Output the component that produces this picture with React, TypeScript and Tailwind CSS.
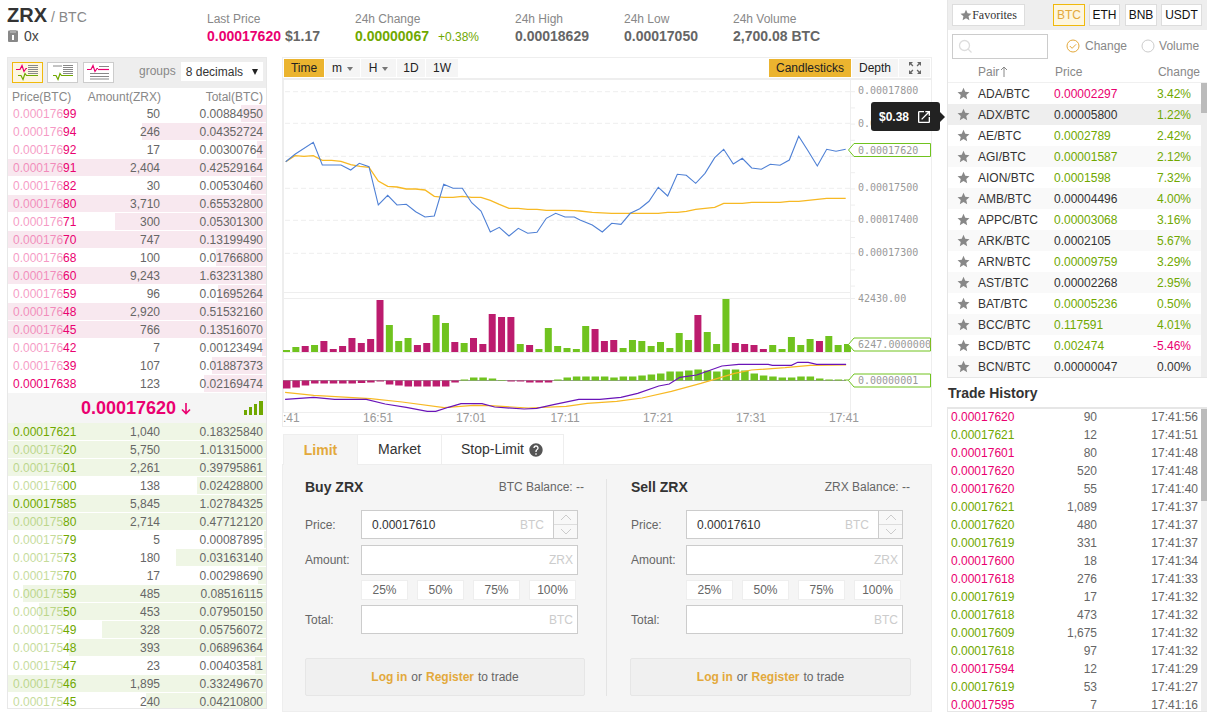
import React from "react";

const RED = "text-[#ea0070]";
const GREEN = "text-[#70a800]";

const asks: [string, string, string][] = [
  ["0.00017699", "50", "0.00884950"], ["0.00017694", "246", "0.04352724"], ["0.00017692", "17", "0.00300764"],
  ["0.00017691", "2,404", "0.42529164"], ["0.00017682", "30", "0.00530460"], ["0.00017680", "3,710", "0.65532800"],
  ["0.00017671", "300", "0.05301300"], ["0.00017670", "747", "0.13199490"], ["0.00017668", "100", "0.01766800"],
  ["0.00017660", "9,243", "1.63231380"], ["0.00017659", "96", "0.01695264"], ["0.00017648", "2,920", "0.51532160"],
  ["0.00017645", "766", "0.13516070"], ["0.00017642", "7", "0.00123494"], ["0.00017639", "107", "0.01887373"],
  ["0.00017638", "123", "0.02169474"],
];
const bids: [string, string, string][] = [
  ["0.00017621", "1,040", "0.18325840"], ["0.00017620", "5,750", "1.01315000"], ["0.00017601", "2,261", "0.39795861"],
  ["0.00017600", "138", "0.02428800"], ["0.00017585", "5,845", "1.02784325"], ["0.00017580", "2,714", "0.47712120"],
  ["0.00017579", "5", "0.00087895"], ["0.00017573", "180", "0.03163140"], ["0.00017570", "17", "0.00298690"],
  ["0.00017559", "485", "0.08516115"], ["0.00017550", "453", "0.07950150"], ["0.00017549", "328", "0.05756072"],
  ["0.00017548", "393", "0.06896364"], ["0.00017547", "23", "0.00403581"], ["0.00017546", "1,895", "0.33249670"],
  ["0.00017545", "240", "0.04210800"],
];
const pairs: [string, string, "r" | "g" | "d", string, "r" | "g" | "d"][] = [
  ["ADA/BTC", "0.00002297", "r", "3.42%", "g"], ["ADX/BTC", "0.00005800", "d", "1.22%", "g"],
  ["AE/BTC", "0.0002789", "g", "2.42%", "g"], ["AGI/BTC", "0.00001587", "g", "2.12%", "g"],
  ["AION/BTC", "0.0001598", "g", "7.32%", "g"], ["AMB/BTC", "0.00004496", "d", "4.00%", "g"],
  ["APPC/BTC", "0.00003068", "g", "3.16%", "g"], ["ARK/BTC", "0.0002105", "d", "5.67%", "g"],
  ["ARN/BTC", "0.00009759", "g", "3.29%", "g"], ["AST/BTC", "0.00002268", "d", "2.95%", "g"],
  ["BAT/BTC", "0.00005236", "g", "0.50%", "g"], ["BCC/BTC", "0.117591", "g", "4.01%", "g"],
  ["BCD/BTC", "0.002474", "g", "-5.46%", "r"], ["BCN/BTC", "0.00000047", "d", "0.00%", "d"],
];
const trades: [string, string, string, "r" | "g"][] = [
  ["0.00017620", "90", "17:41:56", "r"], ["0.00017621", "12", "17:41:51", "g"], ["0.00017601", "80", "17:41:48", "r"],
  ["0.00017620", "520", "17:41:48", "r"], ["0.00017620", "55", "17:41:40", "r"], ["0.00017621", "1,089", "17:41:37", "g"],
  ["0.00017620", "480", "17:41:37", "g"], ["0.00017619", "331", "17:41:37", "g"], ["0.00017600", "18", "17:41:34", "r"],
  ["0.00017618", "276", "17:41:33", "r"], ["0.00017619", "17", "17:41:32", "g"], ["0.00017618", "473", "17:41:32", "g"],
  ["0.00017609", "1,675", "17:41:32", "g"], ["0.00017618", "97", "17:41:32", "g"], ["0.00017594", "12", "17:41:29", "r"],
  ["0.00017619", "53", "17:41:27", "g"], ["0.00017595", "7", "17:41:16", "r"],
];

const tone = (t: "r" | "g" | "d") => (t === "r" ? RED : t === "g" ? GREEN : "text-[#333]");

function BookRow({ row, side, solid }: { row: [string, string, string]; side: "a" | "b"; solid: boolean }) {
  const w = Math.min(258, parseFloat(row[2]) * 2850);
  const c = side === "a" ? RED : GREEN;
  const cut = row[0].length - 2;
  return (
    <div className="relative h-[18px] flex text-[12px] leading-[18px] text-[#666]">
      <div
        className={`absolute right-0 top-0 h-[17px] ${side === "a" ? "bg-[#f8e8ef]" : "bg-[#eff6e5]"}`}
        style={{ width: w }}
      />
      <div className={`relative w-[80px] pl-[5px] ${c}`}>
        {solid ? (
          row[0]
        ) : (
          <>
            <span className="opacity-40">{row[0].slice(0, cut)}</span>
            {row[0].slice(cut)}
          </>
        )}
      </div>
      <div className="relative w-[72px] text-right">{row[1]}</div>
      <div className="relative flex-1 text-right pr-[3px]">{row[2]}</div>
    </div>
  );
}

function BookIcon({ mode }: { mode: 0 | 1 | 2 }) {
  return (
    <svg width="24" height="17" viewBox="0 0 24 17">
      {mode !== 1 && (
        <path d="M0 5.5h4l2-4 2 6 2-3h1" fill="none" stroke="#ea0070" strokeWidth="1.2" />
      )}
      {mode !== 2 && (
        <path d="M2 11.5h3l2 4 2-6 1.5 2H22" fill="none" stroke="#70a800" strokeWidth="1.2" />
      )}
      {mode === 2 && <path d="M11 5.5h11" stroke="#ea0070" strokeWidth="1.2" />}
      {mode === 1 && <path d="M2 2h9" stroke="#888" strokeWidth="1" />}
      <path
        d={mode === 2 ? "M3 9.5h19M3 12.5h19M3 15h19M12 2.5h10" : "M12 1.5h10M12 3.5h10M12 5.5h10M12 7.5h10M12 9.5h10"}
        stroke="#888"
        strokeWidth="1"
      />
    </svg>
  );
}

const Star = ({ size = 13 }: { size?: number }) => (
  <svg width={size} height={size} viewBox="0 0 24 24" fill="#888">
    <path d="M12 1.5l3.2 7.2 7.8.8-5.9 5.2 1.7 7.8L12 18.4l-6.8 4.1 1.7-7.8L1 9.5l7.8-.8z" />
  </svg>
);

const blue: [number, number][] = [
  [285.7, 161.7], [295, 154.3], [313.3, 142.3], [322.3, 165], [341, 165], [350.7, 170], [359.3, 163.3], [369, 166.7],
  [378.3, 205], [387.7, 195.3], [397, 205], [406.3, 204.3], [415.7, 211.7], [425, 217], [434.3, 216], [443.7, 184.3],
  [453, 188.3], [462.3, 188.3], [471.7, 202.7], [481, 211], [490.3, 232], [499.3, 227.3], [509, 236], [518.3, 228.3],
  [527.7, 233.3], [537, 232.3], [546.3, 218.3], [555.7, 213.3], [565, 217], [574.3, 217], [580, 220], [592.3, 225],
  [602.3, 232], [611.7, 223.3], [621, 224.3], [630.3, 213.3], [639.7, 208.7], [649, 201.3], [658.3, 187.3], [667.7, 196],
  [677.3, 174.3], [686.3, 175.3], [695.7, 183.3], [705, 173.3], [714.7, 157.7], [723.7, 149.3], [733.3, 164], [742.3, 158.3],
  [751.7, 168], [761.3, 169.3], [770.3, 164.3], [780, 165.3], [789.3, 160], [798.7, 136.3], [808, 150.7], [817.3, 166],
  [826.7, 149.3], [836, 151.3], [845.7, 149.3],
];
const zoomA: [number, number][] = [
  [17, 305], [45, 287], [72, 289], [100, 287], [127, 301], [155, 301], [183, 304], [212, 314], [240, 319], [267, 322],
  [295, 363], [323, 379], [351, 381], [379, 387], [407, 387], [435, 390], [463, 409], [491, 412], [519, 412], [547, 409],
  [575, 412], [603, 412], [631, 421], [658, 433], [687, 445], [715, 445], [743, 448], [771, 448], [799, 451], [827, 451],
  [855, 451], [883, 452], [900, 453],
];
const zoomB: [number, number][] = [
  [37, 457], [95, 460], [235, 460], [263, 457], [292, 457], [319, 454], [347, 448], [375, 445], [404, 442], [431, 430],
  [487, 430], [515, 427], [600, 427], [628, 424], [656, 424], [684, 421], [740, 415], [797, 415],
];
const orange: [number, number][] = [
  ...zoomA.map(([x, y]): [number, number] => [x / 3 + 280, y / 3 + 60]),
  ...zoomB.map(([x, y]): [number, number] => [x / 3 + 580, y / 3 + 60]),
];
const purpleZ: [number, number][] = [
  [12, 328], [80, 322], [130, 328], [205, 328], [250, 342], [300, 352], [350, 364], [370, 364], [400, 352], [430, 341],
  [480, 341], [510, 351], [580, 357], [610, 355], [650, 344], [710, 328], [760, 328], [810, 322], [850, 310], [900, 288],
  [925, 282], [950, 262], [990, 255], [1050, 228], [1090, 223], [1160, 223], [1170, 226], [1215, 226], [1230, 217],
  [1255, 217], [1275, 223], [1345, 223],
];
const orange2Z: [number, number][] = [
  [12, 307], [80, 316], [215, 326], [290, 336], [390, 353], [460, 346], [500, 347], [590, 354], [680, 349], [730, 340],
  [800, 334], [860, 324], [930, 304], [1000, 280], [1080, 250], [1120, 240], [1200, 233], [1260, 226], [1345, 225],
];
const mapZ = (a: [number, number][]) => a.map(([x, y]) => `${(x / 2.376 + 280).toFixed(1)},${(y / 3 + 290).toFixed(1)}`).join(" ");
const pts = (a: [number, number][]) => a.map(([x, y]) => `${x.toFixed(1)},${y.toFixed(1)}`).join(" ");

const vols: [number, "g" | "m"][] = [
  [2, "g"], [5, "g"], [6, "m"], [7, "g"], [11, "m"], [3, "m"], [6, "m"], [14, "m"], [9, "m"], [13, "m"], [52, "m"], [27, "g"],
  [11, "g"], [14, "g"], [7, "m"], [9, "m"], [37, "g"], [29, "g"], [10, "m"], [9, "g"], [14, "m"], [8, "m"], [38, "m"], [35, "m"],
  [35, "m"], [8, "g"], [7, "m"], [3, "g"], [24, "g"], [6, "g"], [4, "g"], [3, "g"], [26, "g"], [23, "m"], [11, "m"], [12, "m"],
  [4, "g"], [12, "g"], [11, "g"], [6, "g"], [10, "g"], [4, "g"], [19, "g"], [12, "g"], [37, "m"], [20, "g"], [8, "g"], [53, "g"],
  [9, "m"], [8, "m"], [7, "m"], [3, "m"], [7, "g"], [3, "g"], [15, "g"], [7, "g"], [13, "g"], [11, "m"], [16, "g"], [7, "g"], [8, "g"],
];
const macd: number[] = [
  -8, -7, -5, -3, -3, -3, -3, -3, -2.5, -2, -1, -4, -5, -6, -6, -6, -6, -6, -2, 1, 3, 3, 2, 0.5, -1, -1, -2, -2, -2, 1, 3, 4, 4, 4, 4,
  3, 4, 4, 5, 6, 7, 9, 9, 10, 11, 10, 9, 11, 11, 10, 7, 5, 4, 3, 3, 4, 4, 2, 1, 1, 1,
];
const MAG = "#bc1c6e";
const GRN = "#70c31f";

function Chart() {
  const grid = [91.7, 123.3, 156.3, 188.3, 220.3, 253.3];
  const labels: [string, number][] = [
    ["0.00017800", 90.5], ["0.00017700", 123], ["0.00017500", 187.5], ["0.00017400", 219.5], ["0.00017300", 252.5],
  ];
  const ticks = Array.from({ length: 13 }, (_, i) => 91.7 + i * 16.2);
  const monoCls = "font-['DejaVu_Sans_Mono'] text-[10px] fill-[#999]";
  const times: [string, number][] = [["16:51", 378], ["17:01", 471], ["17:11", 565], ["17:21", 658], ["17:31", 751], ["17:41", 844]];
  return (
    <svg className="block" width="648" height="347" viewBox="283 80 648 347">
      <path d="M283.5 80V412M850.5 80V412M283 292.5H851M283 298.5H851M283 352.5H851M283 359.5H851M283 412.5H851" stroke="#eee" fill="none" />
      {grid.map((y) => (
        <path key={y} d={`M285 ${y}H850`} stroke="#eee" strokeWidth="1" strokeDasharray="5 3" />
      ))}
      {ticks.map((y) => (
        <path key={y} d={`M851 ${y}h4`} stroke="#eee" />
      ))}
      <path d="M851 298.5h4" stroke="#eee" />
      {labels.map(([t, y]) => (
        <text key={t} x="858" y={y + 3.5} className={monoCls}>{t}</text>
      ))}
      <text x="858" y="302" className={monoCls}>42430.00</text>
      <polyline points={pts(orange)} fill="none" stroke="#f7b924" strokeWidth="1.3" />
      <polyline points={pts(blue)} fill="none" stroke="#4f80d5" strokeWidth="1.1" />

      {vols.map(([h, c], i) => (
        <rect key={i} x={283 + i * 9.35} y={352 - h} width="7" height={h} fill={c === "g" ? GRN : MAG} />
      ))}
      <path d="M283 380.5H846" stroke="#555" strokeWidth="0.6" />
      {macd.map((h, i) => (
        <rect
          key={i}
          x={283 + i * 9.35}
          y={h < 0 ? 380.5 : 380.5 - h}
          width="7.5"
          height={Math.abs(h)}
          fill={h < 0 ? MAG : GRN}
        />
      ))}
      <polyline points={mapZ(orange2Z)} fill="none" stroke="#f7b924" strokeWidth="1.2" />
      <polyline points={mapZ(purpleZ)} fill="none" stroke="#6a14b8" strokeWidth="1.2" />

      {([[150, "0.00017620"], [344.5, "6247.0000000"], [380.5, "0.00000001"]] as [number, string][]).map(([y, t]) => (
        <g key={t}>
          <path d={`M930.5 ${y - 6.5}H854L848.5 ${y}L854 ${y + 6.5}H930.5Z`} fill="#fff" stroke={GRN} />
          <text x="858" y={y + 3.5} className={monoCls} textLength={t.length > 10 ? 73 : undefined}>{t}</text>
        </g>
      ))}

      <text x="283" y="422" className="text-[12px] fill-[#999]">:41</text>
      {times.map(([t, x]) => (
        <text key={t} x={x} y="422" textAnchor="middle" className="text-[12px] fill-[#999]">{t}</text>
      ))}
    </svg>
  );
}

const Caret = () => <span className="ml-[5px] inline-block border-x-[3.5px] border-t-[4px] border-x-transparent border-t-[#777] align-middle" />;

function Chev({ down }: { down?: boolean }) {
  return (
    <svg width="12" height="7" viewBox="0 0 12 7">
      <path d={down ? "M1 1l5 5 5-5" : "M1 6l5-5 5 5"} fill="none" stroke="#ccc" strokeWidth="1" />
    </svg>
  );
}

function Pct({ t }: { t: string }) {
  return <div className="w-[47px] h-[20px] bg-white border border-[#eee] text-center text-[12px] leading-[19px] text-[#666]">{t}</div>;
}

function Side({ title, balance, unit, sell }: { title: string; balance: string; unit: string; sell?: boolean }) {
  const label = `w-[56px] text-[12px] text-[#666] ${sell ? "pl-px" : ""}`;
  const box = "w-[217px] bg-white border border-[#ccc] text-[12px] flex items-center";
  const u = "ml-auto text-[#ccc]";
  return (
    <div className={`${sell ? "w-[281px]" : "w-[280px]"} flex flex-col`}>
      <div className={`h-[16px] flex items-center justify-between pr-px mb-[15px] ${sell ? "pl-px" : ""}`}>
        <span className="text-[14px] font-bold text-[#333]">{title}</span>
        <span className="text-[12px] text-[#666]">{balance}</span>
      </div>
      <div className="flex items-center h-[29px] mb-[6px]">
        <div className={label}>Price:</div>
        <div className={`${box} h-[29px]`}>
          <span className="pl-[10px] text-[#333]">0.00017610</span>
          <span className={`${u} pr-[9px]`}>{unit}</span>
          <div className="w-[24px] h-full border-l border-[#ccc] bg-[#f8f8f8] flex flex-col">
            <div className="h-[14px] flex items-center justify-center border-b border-[#ddd]"><Chev /></div>
            <div className="flex-1 flex items-center justify-center"><Chev down /></div>
          </div>
        </div>
      </div>
      <div className="flex items-center h-[30px] mb-[5px]">
        <div className={label}>Amount:</div>
        <div className={`${box} h-[30px]`}><span className={`${u} pr-[4px]`}>{title.split(" ")[1]}</span></div>
      </div>
      <div className="flex h-[20px] mb-[5px] pl-[56px] gap-[9px]">
        <Pct t="25%" /><Pct t="50%" /><Pct t="75%" /><Pct t="100%" />
      </div>
      <div className="flex items-center h-[29px] mb-[24px]">
        <div className={label}>Total:</div>
        <div className={`${box} h-[29px]`}><span className={`${u} pr-[4px]`}>{unit}</span></div>
      </div>
      <div className="h-[38px] rounded-[2px] border border-[#e6e6e6] bg-[#f0f0f0] flex items-center justify-center text-[12px] text-[#666]">
        <span className="font-bold text-[#e3a93c]">Log in</span>
        <span className="mx-[4px]">or</span>
        <span className="font-bold text-[#e3a93c]">Register</span>
        <span className="ml-[4px]">to trade</span>
      </div>
    </div>
  );
}

function Stat({ w, label, children }: { w: string; label: string; children: React.ReactNode }) {
  return (
    <div className={w}>
      <div className="h-[14px] leading-[14px] text-[12px] text-[#888]">{label}</div>
      <div className="mt-[2px] h-[16px] leading-[16px] text-[14px] font-bold text-[#666] whitespace-nowrap">{children}</div>
    </div>
  );
}

export default function App() {
  return (
    <div className="w-[1223px] h-[726px] overflow-hidden bg-white flex pl-[7px] font-['Liberation_Sans',Arial,sans-serif]">
      <div className="w-[925px] flex flex-col shrink-0">
        {/* Header */}
        <div className="h-[57px] flex">
          <div className="w-[200px] pt-[5px]">
            <div className="h-[20px] flex items-baseline leading-[20px]">
              <span className="text-[20px] font-bold text-[#333]">ZRX</span>
              <span className="ml-[4px] text-[14px] text-[#888]">/ BTC</span>
            </div>
            <div className="mt-[3px] h-[16px] flex items-center text-[14px] text-[#444]">
              <svg width="12" height="12" viewBox="0 0 12 12" className="mr-[5px]">
                <path d="M1 1.5Q1 .5 2 .5h8q1 0 1 1V11q0 1-1 1H2q-1 0-1-1Z" fill="#888" />
                <rect x="3" y="0" width="6" height="3" fill="#aaa" />
                <rect x="5" y="5" width="2" height="5" fill="#fff" />
              </svg>
              0x
            </div>
          </div>
          <div className="flex pt-[12px]">
            <Stat w="w-[148px]" label="Last Price">
              <span className={RED}>0.00017620</span>
              <span className="ml-[4px]">$1.17</span>
            </Stat>
            <Stat w="w-[160px]" label="24h Change">
              <span className={GREEN}>0.00000067</span>
              <span className={`ml-[9px] text-[12px] font-normal ${GREEN}`}>+0.38%</span>
            </Stat>
            <Stat w="w-[109px]" label="24h High">0.00018629</Stat>
            <Stat w="w-[109px]" label="24h Low">0.00017050</Stat>
            <Stat w="w-[130px]" label="24h Volume">2,700.08 BTC</Stat>
          </div>
        </div>

        <div className="flex gap-[15px]">
          {/* Order book */}
          <div className="w-[260px] h-[652px] border border-[#e8e8e8] shrink-0 overflow-hidden">
            <div className="h-[30px] bg-[#eee] flex items-start pt-[4px] pl-[4px]">
              <div className="w-[31px] h-[21px] border border-[#f0b90b] bg-[#fdf6e0] flex items-center justify-center"><BookIcon mode={0} /></div>
              <div className="ml-[4px] w-[31px] h-[21px] border border-[#ccc] bg-white flex items-center justify-center"><BookIcon mode={1} /></div>
              <div className="ml-[5px] w-[31px] h-[21px] border border-[#ccc] bg-white flex items-center justify-center"><BookIcon mode={2} /></div>
              <span className="ml-[25px] text-[12px] leading-[19px] text-[#888]">groups</span>
              <div className="ml-[5px] w-[82px] h-[19px] bg-white flex items-center pl-[5px] pr-[5px] text-[12px] text-[#333]">
                8 decimals
                <span className="ml-auto inline-block border-x-[3.5px] border-t-[6px] border-x-transparent border-t-[#222]" />
              </div>
            </div>
            <div className="h-[17px] flex text-[12px] leading-[18px] text-[#888]">
              <div className="w-[79px] pl-[4px]">Price(BTC)</div>
              <div className="w-[74px] text-right">Amount(ZRX)</div>
              <div className="flex-1 text-right pr-[3px]">Total(BTC)</div>
            </div>
            {asks.map((r, i) => <BookRow key={r[0]} row={r} side="a" solid={i === 15} />)}
            <div className="h-[30px] bg-[#f5f5f5] flex items-center">
              <span className={`ml-[73px] text-[18px] font-bold ${RED}`}>0.00017620</span>
              <svg width="10" height="13" viewBox="0 0 10 13" className="ml-[5px]">
                <path d="M5 1v10M1 7.5l4 4 4-4" fill="none" stroke="#ea0070" strokeWidth="1.6" />
              </svg>
              <svg width="20" height="14" viewBox="0 0 20 14" className="ml-[53px]">
                <path d="M0 9h3v5H0zM5 6h3v8H5zM10 3h3v11h-3zM15 0h4v14h-4z" fill="#70a800" />
              </svg>
            </div>
            {bids.map((r, i) => <BookRow key={r[0]} row={r} side="b" solid={i === 0 || i === 4} />)}
          </div>

          {/* Centre */}
          <div className="w-[650px] shrink-0 flex flex-col">
            <div className="relative h-[370px] border border-[#eee]">
              <div className="h-[22px] border-b-2 border-[#eee] flex items-start pt-px pl-px text-[12px] text-[#222]">
                <div className="w-[40px] h-[18px] leading-[18px] text-center bg-[#ebb42f]">Time</div>
                <div className="ml-px w-[35px] h-[18px] leading-[18px] text-center bg-[#f5f5f5]">m<Caret /></div>
                <div className="ml-px w-[35px] h-[18px] leading-[18px] text-center bg-[#f5f5f5]">H<Caret /></div>
                <div className="ml-px w-[28px] h-[18px] leading-[18px] text-center bg-[#f5f5f5]">1D</div>
                <div className="ml-px w-[32px] h-[18px] leading-[18px] text-center bg-[#f5f5f5]">1W</div>
                <div className="ml-auto w-[82px] h-[18px] leading-[18px] text-center bg-[#ebb42f]">Candlesticks</div>
                <div className="ml-px w-[46px] h-[18px] leading-[18px] text-center bg-[#f5f5f5]">Depth</div>
                <div className="ml-px mr-px w-[31px] h-[18px] flex items-center justify-center bg-[#f5f5f5]">
                  <svg width="16" height="16" viewBox="0 0 24 24" fill="#666">
                    <path d="M15 3l2.3 2.3-2.89 2.87 1.42 1.42L18.7 6.7 21 9V3zM3 9l2.3-2.3 2.87 2.89 1.42-1.42L6.7 5.3 9 3H3zm6 12l-2.3-2.3 2.89-2.87-1.42-1.42L5.3 17.3 3 15v6zm12-6l-2.3 2.3-2.87-2.89-1.42 1.42 2.89 2.87L15 21h6z" />
                  </svg>
                </div>
              </div>
              <Chart />
              <div className="absolute left-[588px] top-[44px] w-[69px] h-[29px] rounded-[3px] bg-[#222] flex items-center pl-[8px] text-[12px] font-bold text-white">
                $0.38
                <svg width="16" height="16" viewBox="0 0 24 24" fill="#fff" className="ml-[7px]">
                  <path d="M19 19H5V5h7V3H5c-1.11 0-2 .9-2 2v14c0 1.1.89 2 2 2h14c1.1 0 2-.9 2-2v-7h-2v7zM14 3v2h3.59l-9.83 9.83 1.41 1.41L19 6.41V10h2V3h-7z" />
                </svg>
                <span className="absolute left-[69px] top-[10px] border-y-[5px] border-l-[5px] border-y-transparent border-l-[#222]" />
              </div>
            </div>

            {/* Tabs */}
            <div className="mt-[7px] h-[30px] flex text-[14px] text-[#333] relative z-10">
              <div className="w-[74px] h-[31px] ml-px bg-[#f5f5f5] border-t border-l border-[#eee] flex items-center justify-center font-bold text-[#e3a93c]">Limit</div>
              <div className="w-[84px] h-[30px] border-t border-l border-[#eee] flex items-center justify-center">Market</div>
              <div className="w-[123px] h-[30px] border-t border-x border-[#eee] flex items-center justify-center">
                Stop-Limit
                <svg width="16" height="16" viewBox="0 0 24 24" fill="#555" className="ml-[4px]">
                  <path d="M12 2C6.48 2 2 6.48 2 12s4.48 10 10 10 10-4.48 10-10S17.52 2 12 2zm1 17h-2v-2h2v2zm2.07-7.75l-.9.92C13.45 12.9 13 13.5 13 15h-2v-.5c0-1.1.45-2.1 1.17-2.83l1.24-1.26c.37-.36.59-.86.59-1.41 0-1.1-.9-2-2-2s-2 .9-2 2H8c0-2.21 1.79-4 4-4s4 1.79 4 4c0 .88-.36 1.68-.93 2.25z" />
                </svg>
              </div>
            </div>
            {/* Trade form */}
            <div className="h-[248px] border border-[#eee] bg-[#f5f5f5] pt-[14px] pl-[22px] flex">
              <Side title="Buy ZRX" balance="BTC Balance: --" unit="BTC" />
              <div className="ml-[21px] mr-[23px] w-px h-[217px] bg-[#e4e4e4]" />
              <Side title="Sell ZRX" balance="ZRX Balance: --" unit="BTC" sell />
            </div>
          </div>
        </div>
      </div>

      {/* Right column */}
      <div className="ml-[15px] w-[260px] shrink-0 flex flex-col">
        <div className="h-[378px] border-l border-b border-[#e6e6e6] flex flex-col relative">
          <div className="h-[30px] bg-[#eee] flex items-start pt-[4px] pl-[4px] text-[12px]">
            <div className="w-[73px] h-[22px] bg-white border border-[#ddd] flex items-center justify-center font-['Liberation_Serif',serif] text-[#333]">
              <Star size={12} />Favorites
            </div>
            <div className="ml-[28px] w-[32px] h-[22px] bg-[#fdf6e0] border border-[#f0b90b] text-[#e3a93c] flex items-center justify-center">BTC</div>
            <div className="ml-[4px] w-[31px] h-[22px] bg-white border border-[#ddd] text-[#111] flex items-center justify-center">ETH</div>
            <div className="ml-[5px] w-[32px] h-[22px] bg-white border border-[#ddd] text-[#111] flex items-center justify-center">BNB</div>
            <div className="ml-[4px] w-[41px] h-[22px] bg-white border border-[#ddd] text-[#111] flex items-center justify-center">USDT</div>
          </div>
          <div className="h-[31px] flex items-start pt-[4px] pl-[4px] text-[12px] text-[#888]">
            <div className="w-[96px] h-[25px] border border-[#ccc] flex items-center pl-[5px]">
              <svg width="15" height="15" viewBox="0 0 15 15" fill="none" stroke="#ddd" strokeWidth="1.3">
                <circle cx="6.5" cy="6.5" r="5" />
                <path d="M10 10l3.5 3.5" />
              </svg>
            </div>
            <svg width="14" height="14" viewBox="0 0 14 14" fill="none" className="ml-[18px] mt-[5px]">
              <circle cx="7" cy="7" r="6" stroke="#e3a93c" />
              <path d="M3.8 7l2.3 2.3 4-4" stroke="#e3a93c" />
            </svg>
            <span className="ml-[5px] leading-[25px]">Change</span>
            <svg width="14" height="14" viewBox="0 0 14 14" fill="none" className="ml-[14px] mt-[5px]">
              <circle cx="7" cy="7" r="6" stroke="#ccc" />
            </svg>
            <span className="ml-[4px] leading-[25px]">Volume</span>
          </div>
          <div className="h-[22px] flex items-center text-[12px] text-[#888] border-b border-[#f0f0f0]">
            <div className="w-[107px] pl-[30px] flex items-center">
              Pair
              <svg width="8" height="11" viewBox="0 0 8 11" className="ml-px"><path d="M4 11V1M1 4l3-3 3 3" fill="none" stroke="#888" /></svg>
            </div>
            <div className="w-[80px]">Price</div>
            <div className="w-[65px] text-right">Change</div>
          </div>
          <div className="flex flex-1 overflow-hidden">
            <div className="flex-1">
              {pairs.map((p, i) => (
                <div
                  key={p[0]}
                  className={`h-[21px] flex items-center text-[12px] ${i === 1 ? "bg-[#eee]" : i % 2 === 1 ? "bg-[#f9f9f9]" : "bg-white"}`}
                >
                  <div className="w-[30px] pl-[9px] flex items-center"><Star /></div>
                  <div className="w-[76px] text-[#333]">{p[0]}</div>
                  <div className={`w-[90px] ${tone(p[2])}`}>{p[1]}</div>
                  <div className={`w-[47px] text-right ${tone(p[4])}`}>{p[3]}</div>
                </div>
              ))}
            </div>
            <div className="w-[6px] bg-[#eee]"><div className="h-[30px] bg-[#bbb]" /></div>
          </div>
        </div>

        <div className="h-[29px] pl-px pt-[2px] flex items-center text-[14px] font-bold text-[#333]">Trade History</div>
        <div className="h-[305px] border-l border-t-2 border-b border-[#e6e6e6] flex overflow-hidden">
          <div className="flex-1">
            {trades.map((t, i) => (
              <div key={i} className="h-[18px] flex text-[12px] leading-[17px] text-[#666]">
                <div className={`w-[80px] pl-[3px] ${t[3] === "r" ? RED : GREEN}`}>{t[0]}</div>
                <div className="w-[69px] text-right">{t[1]}</div>
                <div className="w-[101px] text-right">{t[2]}</div>
              </div>
            ))}
          </div>
          <div className="w-[6px] bg-[#eee]"><div className="h-[92px] bg-[#bbb]" /></div>
        </div>
      </div>
    </div>
  );
}
